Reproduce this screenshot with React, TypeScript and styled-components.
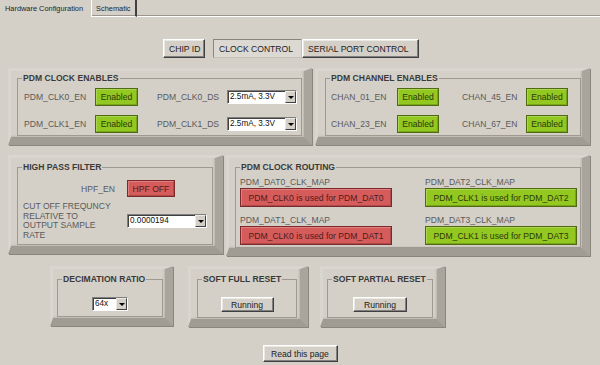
import styled, { createGlobalStyle } from "styled-components";

const GlobalStyle = createGlobalStyle`
  html, body {
    margin: 0;
    padding: 0;
    background: #d4d0c8;
  }
  body {
    font-family: "Liberation Sans", Arial, sans-serif;
    font-size: 8.6px;
    color: #5a5a5a;
  }
`;

const Screen = styled.div`
  width: 600px;
  height: 365px;
  overflow: hidden;
  background: #d4d0c8;
  display: flex;
  flex-direction: column;
  & > * {
    flex-shrink: 0;
  }
`;

const TabBar = styled.div`
  display: flex;
  height: 17px;
  box-sizing: border-box;
`;

const Tab = styled.div<{ $active?: boolean }>`
  display: flex;
  align-items: center;
  padding: 0 ${(p) => (p.$active ? "7px 0 4px" : "4px")};
  font-size: 7.4px;
  color: #1e1e1e;
  box-sizing: border-box;
  border-left: 1px solid ${(p) => (p.$active ? "transparent" : "#ffffff")};
  border-right: ${(p) => (p.$active ? "1px solid transparent" : "2px solid #404040")};
  border-bottom: 1px solid ${(p) => (p.$active ? "transparent" : "#ffffff")};
  box-shadow: ${(p) => (p.$active ? "none" : "inset 0 -1px 0 #9a968e")};
`;

const TabFill = styled.div`
  flex: 1;
  border-bottom: 1px solid #ffffff;
  box-shadow: inset 0 -1px 0 #9a968e;
`;

const NavRow = styled.div`
  display: flex;
  margin: 22px 0 0 163px;
`;

const NavButton = styled.button<{ $pressed?: boolean; $w: number }>`
  box-sizing: border-box;
  width: ${(p) => p.$w}px;
  height: 19px;
  padding: 0 0 0 5px;
  text-align: left;
  font-family: inherit;
  font-size: 8.6px;
  color: #222;
  background: ${(p) => (p.$pressed ? "#dcd9d2" : "#d4d0c8")};
  border: 1px solid;
  border-color: ${(p) =>
    p.$pressed ? "#8a867e #c4c0b8 #c4c0b8 #8a867e" : "#ffffff #404040 #404040 #ffffff"};
  box-shadow: ${(p) =>
    p.$pressed ? "none" : "inset -1px -1px 0 #808080, inset 1px 1px 0 #ebe9e4"};
  &:first-child {
    margin-right: 8px;
  }
`;

const Row = styled.div<{ $top: number; $left: number }>`
  display: flex;
  align-items: flex-start;
  margin: ${(p) => p.$top}px 0 0 ${(p) => p.$left}px;
`;

const Panel = styled.div<{ $w: number; $pad: string; $gapAfter?: number }>`
  box-sizing: border-box;
  width: ${(p) => p.$w}px;
  padding: ${(p) => p.$pad};
  margin-right: ${(p) => p.$gapAfter ?? 0}px;
  border-style: solid;
  border-width: 3px 8px 8px 3px;
  border-color: #d9d6cf #a9a59d #a09c93 #d9d6cf;
  box-shadow: 1px 1px 0 #8a867e, inset -2px -2px 2px -1px rgba(0, 0, 0, 0.12);
`;

/* padding-left also moves the legend, so the legend is pulled back to sit 4px in */
const Group = styled.fieldset<{ $pad: string; $padL: number }>`
  margin: 0;
  min-width: 0;
  padding: ${(p) => p.$pad};
  padding-left: ${(p) => p.$padL}px;
  border: 1px solid #9e9a92;
  & > legend {
    margin-left: ${(p) => 4 - p.$padL}px;
  }
`;

const Legend = styled.legend`
  padding: 0 1px;
  font-weight: bold;
  font-size: 8.6px;
  line-height: 10px;
  white-space: nowrap;
  color: #3a3a3a;
`;

const EnableGrid = styled.div<{ $cols: string }>`
  display: grid;
  grid-template-columns: ${(p) => p.$cols};
  grid-auto-rows: 18px;
  row-gap: 9px;
  align-items: center;
`;

const Label = styled.span<{ $right?: number }>`
  white-space: nowrap;
  line-height: 10px;
  color: #5a5a5a;
  justify-self: ${(p) => (p.$right !== undefined ? "end" : "start")};
  margin-right: ${(p) => p.$right ?? 0}px;
`;

const StateButton = styled.div<{ $tone: "green" | "red"; $w: number; $h: number }>`
  box-sizing: border-box;
  width: ${(p) => p.$w}px;
  height: ${(p) => p.$h}px;
  display: flex;
  align-items: center;
  justify-content: center;
  white-space: nowrap;
  font-size: 8.6px;
  background: ${(p) => (p.$tone === "green" ? "#93c820" : "#d65b5b")};
  color: ${(p) => (p.$tone === "green" ? "#2c3a0c" : "#4d1c1c")};
  border: 1px solid ${(p) => (p.$tone === "green" ? "#4f6a10" : "#7a2a2a")};
  box-shadow: inset 1px 1px 0 rgba(255, 255, 255, 0.22), inset -1px -1px 0 rgba(0, 0, 0, 0.18);
`;

const Select = styled.div<{ $w: number }>`
  box-sizing: border-box;
  width: ${(p) => p.$w}px;
  height: 14px;
  display: flex;
  background: #ffffff;
  border: 1px solid;
  border-color: #808080 #ffffff #ffffff #808080;
  box-shadow: inset 1px 1px 0 #404040;
`;

const SelectValue = styled.span`
  flex: 1;
  padding-left: 2px;
  font-size: 8.2px;
  line-height: 12px;
  color: #111;
  white-space: nowrap;
  overflow: hidden;
`;

const SelectArrow = styled.span`
  box-sizing: border-box;
  width: 11px;
  background: #d4d0c8;
  border: 1px solid;
  border-color: #eceae5 #404040 #404040 #eceae5;
  display: flex;
  align-items: center;
  justify-content: center;
  &::after {
    content: "";
    border-left: 3px solid transparent;
    border-right: 3px solid transparent;
    border-top: 3px solid #000;
  }
`;

const HpfGrid = styled.div`
  display: grid;
  grid-template-columns: 104px 80px;
  row-gap: 5px;
  align-items: center;
`;

const Note = styled.span`
  line-height: 9.5px;
  color: #5a5a5a;
`;

const RouteGrid = styled.div`
  display: grid;
  grid-template-columns: 152px 152px;
  column-gap: 33px;
  row-gap: 8px;
`;

const RouteCell = styled.div`
  display: flex;
  flex-direction: column;
  gap: 1px;
`;

const Center = styled.div`
  display: flex;
  justify-content: center;
  padding: 13px 0 5px;
`;

const RaisedButton = styled.button<{ $w: number; $h: number }>`
  box-sizing: border-box;
  width: ${(p) => p.$w}px;
  height: ${(p) => p.$h}px;
  padding: 0;
  font-family: inherit;
  font-size: 8.6px;
  color: #222;
  background: #d4d0c8;
  border: 1px solid;
  border-color: #ffffff #404040 #404040 #ffffff;
  box-shadow: inset -1px -1px 0 #808080, inset 1px 1px 0 #ebe9e4;
`;

const Footer = styled.div`
  display: flex;
  justify-content: center;
  margin-top: 18px;
`;

const Dropdown = ({ w, value }: { w: number; value: string }) => (
  <Select $w={w}>
    <SelectValue>{value}</SelectValue>
    <SelectArrow />
  </Select>
);

export default function App() {
  return (
    <Screen>
      <GlobalStyle />
      <TabBar>
        <Tab $active>Hardware Configuration</Tab>
        <Tab>Schematic</Tab>
        <TabFill />
      </TabBar>

      <NavRow>
        <NavButton $w={42}>CHIP ID</NavButton>
        <NavButton $w={89} $pressed>
          CLOCK CONTROL
        </NavButton>
        <NavButton $w={117}>SERIAL PORT CONTROL</NavButton>
      </NavRow>

      <Row $top={10} $left={8}>
        <Panel $w={304} $pad="2px 2px 1px 6px" $gapAfter={3}>
          <Group $pad="5px 4px 2px" $padL={6}>
            <Legend>PDM CLOCK ENABLES</Legend>
            <EnableGrid $cols="71px 62px 70px 70px">
              <Label>PDM_CLK0_EN</Label>
              <StateButton $tone="green" $w={43} $h={18}>Enabled</StateButton>
              <Label>PDM_CLK0_DS</Label>
              <Dropdown w={70} value="2.5mA, 3.3V" />
              <Label>PDM_CLK1_EN</Label>
              <StateButton $tone="green" $w={43} $h={18}>Enabled</StateButton>
              <Label>PDM_CLK1_DS</Label>
              <Dropdown w={70} value="2.5mA, 3.3V" />
            </EnableGrid>
          </Group>
        </Panel>
        <Panel $w={275} $pad="2px 1px 1px 7px">
          <Group $pad="5px 4px 2px" $padL={5}>
            <Legend>PDM CHANNEL ENABLES</Legend>
            <EnableGrid $cols="66px 65px 64px 42px">
              <Label>CHAN_01_EN</Label>
              <StateButton $tone="green" $w={42} $h={18}>Enabled</StateButton>
              <Label>CHAN_45_EN</Label>
              <StateButton $tone="green" $w={42} $h={18}>Enabled</StateButton>
              <Label>CHAN_23_EN</Label>
              <StateButton $tone="green" $w={42} $h={18}>Enabled</StateButton>
              <Label>CHAN_67_EN</Label>
              <StateButton $tone="green" $w={42} $h={18}>Enabled</StateButton>
            </EnableGrid>
          </Group>
        </Panel>
      </Row>

      <Row $top={10} $left={8}>
        <Panel $w={215} $pad="4px 2px 1px 6px" $gapAfter={3}>
          <Group $pad="8px 4px 4px" $padL={5}>
            <Legend>HIGH PASS FILTER</Legend>
            <HpfGrid>
              <Label $right={12}>HPF_EN</Label>
              <StateButton $tone="red" $w={48} $h={17}>HPF OFF</StateButton>
              <Note>
                CUT OFF FREQUNCY
                <br />
                RELATIVE TO
                <br />
                OUTPUT SAMPLE
                <br />
                RATE
              </Note>
              <Dropdown w={80} value="0.0000194" />
            </HpfGrid>
          </Group>
        </Panel>
        <Panel $w={364} $pad="4px 1px 0 6px">
          <Group $pad="5px 4px 2px" $padL={4}>
            <Legend>PDM CLOCK ROUTING</Legend>
            <RouteGrid>
              <RouteCell>
                <Label>PDM_DAT0_CLK_MAP</Label>
                <StateButton $tone="red" $w={152} $h={19}>PDM_CLK0 is used for PDM_DAT0</StateButton>
              </RouteCell>
              <RouteCell>
                <Label>PDM_DAT2_CLK_MAP</Label>
                <StateButton $tone="green" $w={152} $h={19}>PDM_CLK1 is used for PDM_DAT2</StateButton>
              </RouteCell>
              <RouteCell>
                <Label>PDM_DAT1_CLK_MAP</Label>
                <StateButton $tone="red" $w={152} $h={19}>PDM_CLK0 is used for PDM_DAT1</StateButton>
              </RouteCell>
              <RouteCell>
                <Label>PDM_DAT3_CLK_MAP</Label>
                <StateButton $tone="green" $w={152} $h={19}>PDM_CLK1 is used for PDM_DAT3</StateButton>
              </RouteCell>
            </RouteGrid>
          </Group>
        </Panel>
      </Row>

      <Row $top={10} $left={50}>
        <Panel $w={123} $pad="5px 2px 1px 4px" $gapAfter={15}>
          <Group $pad="0 4px" $padL={4}>
            <Legend>DECIMATION RATIO</Legend>
            <Center>
              <Dropdown w={36} value="64x" />
            </Center>
          </Group>
        </Panel>
        <Panel $w={120} $pad="5px 3px 1px 6px" $gapAfter={12}>
          <Group $pad="0 4px" $padL={4}>
            <Legend>SOFT FULL RESET</Legend>
            <Center>
              <RaisedButton $w={53} $h={15}>Running</RaisedButton>
            </Center>
          </Group>
        </Panel>
        <Panel $w={125} $pad="5px 4px 1px 4px">
          <Group $pad="0 2px" $padL={2}>
            <Legend>SOFT PARTIAL RESET</Legend>
            <Center>
              <RaisedButton $w={54} $h={15}>Running</RaisedButton>
            </Center>
          </Group>
        </Panel>
      </Row>

      <Footer>
        <RaisedButton $w={75} $h={17}>Read this page</RaisedButton>
      </Footer>
    </Screen>
  );
}
